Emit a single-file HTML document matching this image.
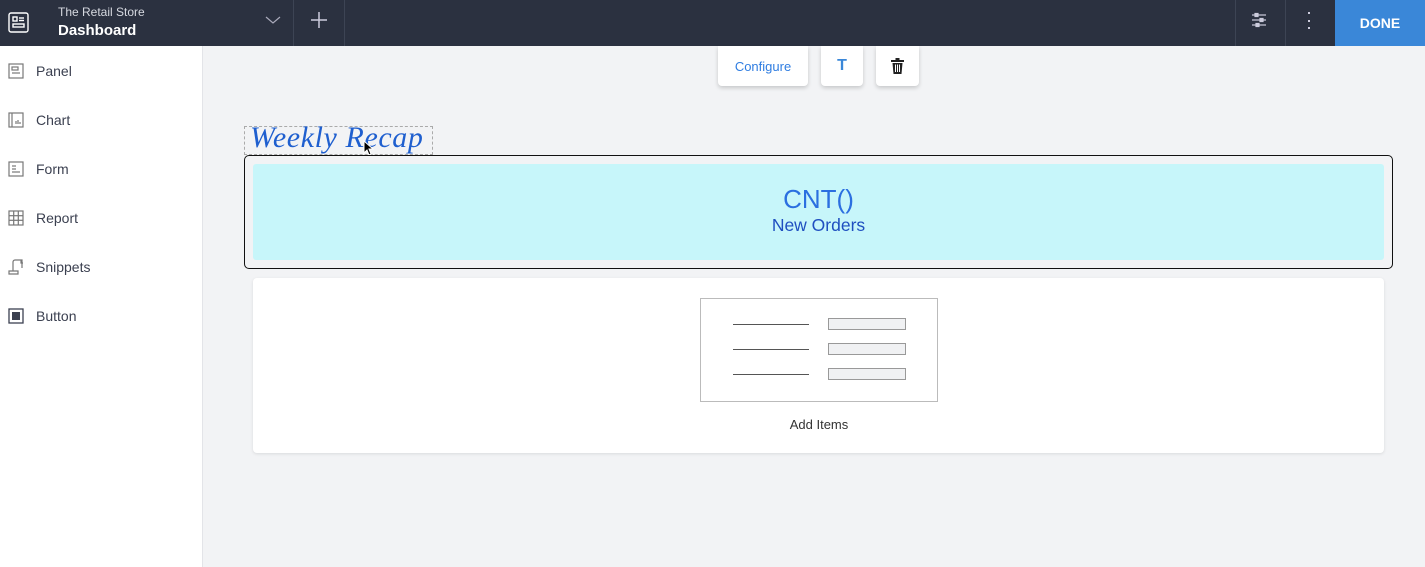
<!DOCTYPE html>
<html><head><meta charset="utf-8"><style>
*{box-sizing:border-box;margin:0;padding:0}
body{width:1425px;height:567px;overflow:hidden;background:#f2f3f5;font-family:"Liberation Sans",sans-serif;position:relative}
.top{position:absolute;left:0;top:0;width:1425px;height:46px;background:#2b3140;color:#fff}
.side{position:absolute;left:0;top:46px;width:203px;height:521px;background:#fff;border-right:1px solid #e3e4e8}
.item{position:absolute;left:8px;height:20px;display:flex;align-items:center;font-size:14px;color:#3b4050}
.item svg{margin-right:12px}
.btn{position:absolute;top:46px;height:40px;background:#fff;border-radius:0 0 4px 4px;box-shadow:0 2px 4px rgba(0,0,0,.18);display:flex;align-items:center;justify-content:center}
</style></head><body>
<div class="top">
  <svg style="position:absolute;left:8px;top:12px" width="21" height="21" viewBox="0 0 21 21" fill="none" stroke="#fff" stroke-width="1.4"><rect x="1" y="1" width="19" height="19" rx="2"/><rect x="5" y="5" width="4" height="4"/><line x1="11" y1="6" x2="16" y2="6"/><line x1="11" y1="8.5" x2="16" y2="8.5"/><rect x="5" y="12" width="11" height="3"/></svg>
  <div style="position:absolute;left:58px;top:5px;font-size:12px;color:#d6d9e0">The Retail Store</div>
  <div style="position:absolute;left:58px;top:22px;font-size:15px;font-weight:bold">Dashboard</div>
  <svg style="position:absolute;left:265px;top:15px" width="16" height="10" viewBox="0 0 16 10" fill="none" stroke="#aab" stroke-width="1.2"><polyline points="1,2 8,8 15,2"/></svg>
  <div style="position:absolute;left:293px;top:0;width:1px;height:46px;background:#3d4454"></div>
  <svg style="position:absolute;left:310px;top:11px" width="18" height="18" viewBox="0 0 18 18" stroke="#ccd" stroke-width="1.5"><line x1="9" y1="1" x2="9" y2="17"/><line x1="1" y1="9" x2="17" y2="9"/></svg>
  <div style="position:absolute;left:344px;top:0;width:1px;height:46px;background:#3d4454"></div>
  <div style="position:absolute;left:1235px;top:0;width:1px;height:46px;background:#3d4454"></div>
  <svg style="position:absolute;left:1251px;top:12px" width="16" height="16" viewBox="0 0 16 16" stroke="#ccd" stroke-width="1.2" fill="#ccd"><line x1="1" y1="3" x2="15" y2="3"/><line x1="1" y1="8" x2="15" y2="8"/><line x1="1" y1="13" x2="15" y2="13"/><rect x="4" y="1.5" width="3" height="3"/><rect x="9" y="6.5" width="3" height="3"/><rect x="5" y="11.5" width="3" height="3"/></svg>
  <div style="position:absolute;left:1285px;top:0;width:1px;height:46px;background:#3d4454"></div>
  <div style="position:absolute;left:1308px;top:12px;width:2px;height:2px;background:#ccd;box-shadow:0 8px 0 #ccd,0 15px 0 #ccd"></div>
  <div style="position:absolute;left:1335px;top:0;width:90px;height:46px;background:#3a87d8;color:#fff;font-size:14px;font-weight:bold;display:flex;align-items:center;justify-content:center">DONE</div>
</div>
<div class="side">
  <div class="item" style="top:15px"><svg width="16" height="16" viewBox="0 0 16 16" fill="none" stroke="#777" stroke-width="1.2"><rect x="1" y="1" width="14" height="14"/><rect x="4" y="4" width="6" height="3"/><line x1="4" y1="10" x2="12" y2="10"/></svg>Panel</div>
  <div class="item" style="top:64px"><svg width="16" height="16" viewBox="0 0 16 16" fill="none" stroke="#777" stroke-width="1.2"><rect x="1" y="1" width="14" height="14"/><line x1="4" y1="1" x2="4" y2="15"/><line x1="8" y1="9" x2="8" y2="12"/><line x1="10" y1="8" x2="10" y2="12"/><line x1="12" y1="10" x2="12" y2="12"/></svg>Chart</div>
  <div class="item" style="top:113px"><svg width="16" height="16" viewBox="0 0 16 16" fill="none" stroke="#777" stroke-width="1.2"><rect x="1" y="1" width="14" height="14"/><line x1="4" y1="5" x2="8" y2="5"/><line x1="4" y1="8" x2="8" y2="8"/><line x1="4" y1="11" x2="12" y2="11"/></svg>Form</div>
  <div class="item" style="top:162px"><svg width="16" height="16" viewBox="0 0 16 16" fill="none" stroke="#777" stroke-width="1.2"><rect x="1" y="1" width="14" height="14"/><line x1="5.7" y1="1" x2="5.7" y2="15"/><line x1="10.3" y1="1" x2="10.3" y2="15"/><line x1="1" y1="5.7" x2="15" y2="5.7"/><line x1="1" y1="10.3" x2="15" y2="10.3"/></svg>Report</div>
  <div class="item" style="top:211px"><svg width="16" height="16" viewBox="0 0 16 16" fill="none" stroke="#777" stroke-width="1.2"><path d="M5 12V3a2 2 0 0 1 2-2h7v8"/><path d="M1 12h9v3H1z"/><path d="M13 1v3h2"/></svg>Snippets</div>
  <div class="item" style="top:260px"><svg width="16" height="16" viewBox="0 0 16 16"><rect x="1" y="1" width="14" height="14" fill="none" stroke="#3b4050" stroke-width="1.3"/><rect x="4" y="4" width="8" height="8" fill="#3b4050"/></svg>Button</div>
</div>
<div class="btn" style="left:718px;width:90px;font-size:13px;color:#2f7de1">Configure</div>
<div class="btn" style="left:821px;width:42px;font-size:16px;font-weight:bold;color:#3a87d8">T</div>
<div class="btn" style="left:876px;width:43px"><svg width="13" height="16" viewBox="0 0 13 16"><rect x="0" y="2" width="13" height="2" fill="#222"/><rect x="4.5" y="0" width="4" height="2" fill="#222"/><path d="M1.5 5h10l-1 11h-8z" fill="#222"/><line x1="4.5" y1="6.5" x2="4.5" y2="14" stroke="#fff"/><line x1="6.5" y1="6.5" x2="6.5" y2="14" stroke="#fff"/><line x1="8.5" y1="6.5" x2="8.5" y2="14" stroke="#fff"/></svg></div>
<div style="position:absolute;left:244px;top:126px;width:189px;height:29px;border:1px dashed #aaa"></div>
<div style="position:absolute;left:250px;top:121px;font-family:'Liberation Serif',serif;font-style:italic;font-size:30px;letter-spacing:0.6px;color:#1f5fcf;white-space:nowrap">Weekly Recap</div>
<svg style="position:absolute;left:363px;top:140px" width="11" height="16" viewBox="0 0 11 16"><path d="M1 1v12l3-3 2 5 2-1-2-5h4z" fill="#000" stroke="#fff" stroke-width="1"/></svg>
<div style="position:absolute;left:244px;top:155px;width:1149px;height:114px;border:1px solid #111;border-radius:5px"></div>
<div style="position:absolute;left:253px;top:164px;width:1131px;height:96px;background:#c7f6fa;border-radius:3px;text-align:center">
  <div style="margin-top:20px;font-size:26px;color:#2b6fe0">CNT()</div>
  <div style="font-size:17.5px;color:#1f4fc0;margin-top:0px">New Orders</div>
</div>
<div style="position:absolute;left:253px;top:278px;width:1131px;height:175px;background:#fff;border-radius:4px;box-shadow:0 1px 3px rgba(0,0,0,.1)"></div>
<div style="position:absolute;left:700px;top:298px;width:238px;height:104px;border:1.5px solid #bbb"></div>
<div style="position:absolute;left:733px;top:324px;width:76px;height:1px;background:#555"></div>
<div style="position:absolute;left:733px;top:349px;width:76px;height:1px;background:#555"></div>
<div style="position:absolute;left:733px;top:374px;width:76px;height:1px;background:#555"></div>
<div style="position:absolute;left:828px;top:318px;width:78px;height:12px;border:1.5px solid #999;background:#f0f1f3"></div>
<div style="position:absolute;left:828px;top:343px;width:78px;height:12px;border:1.5px solid #999;background:#f0f1f3"></div>
<div style="position:absolute;left:828px;top:368px;width:78px;height:12px;border:1.5px solid #999;background:#f0f1f3"></div>
<div style="position:absolute;left:700px;top:417px;width:238px;text-align:center;font-size:13px;color:#333">Add Items</div>
</body></html>
